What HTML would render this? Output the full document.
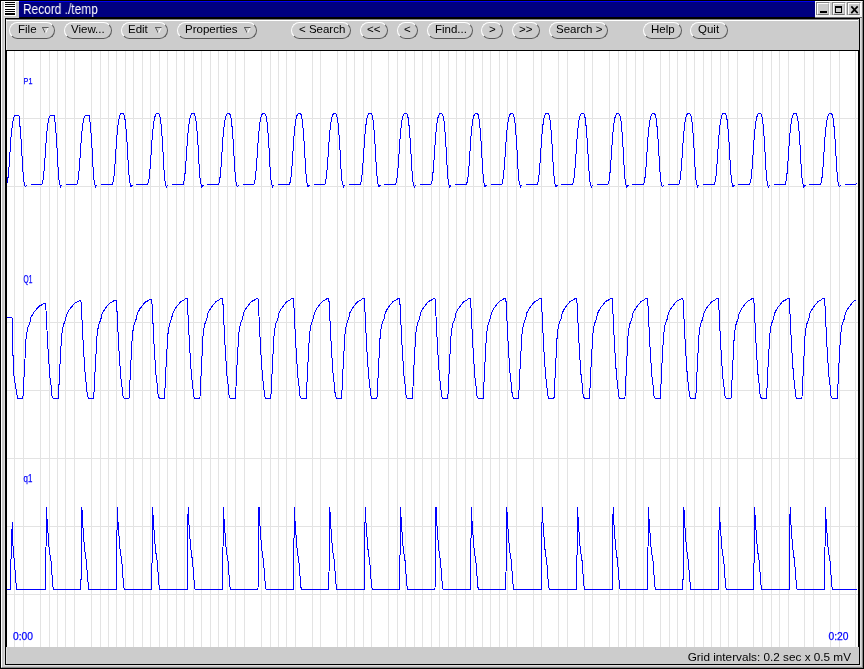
<!DOCTYPE html>
<html><head><meta charset="utf-8"><title>Record ./temp</title>
<style>
html,body{margin:0;padding:0}
body{width:864px;height:669px;overflow:hidden;background:#c8c8c8;position:relative;
font-family:"Liberation Sans",sans-serif;font-size:11.5px;color:#000}
div,span,i{position:absolute;box-sizing:border-box}
#ob{left:0;top:0;width:864px;height:669px;border:1px solid #000;border-right:1px solid #000;border-bottom:1px solid #000}
#hl{left:1px;top:1px;width:862px;height:667px;border-left:1px solid #fff;border-top:1px solid #fff;border-right:1px solid #858585;border-bottom:1px solid #858585}
#il{left:4px;top:17px;width:857px;height:649px;border-left:1px solid #dadada;border-right:1px solid #dedede;border-bottom:1px solid #dedede}
#title{left:19px;top:1px;width:796px;height:16px;background:#000080;border-top:1px solid #0000f0;color:#fff;font-size:12px;line-height:15px}
#title span{will-change:transform;left:4px;top:0px;white-space:nowrap;font-size:14px;transform:scaleX(0.85);transform-origin:0 0}
#micon{left:4px;top:2px;width:12px;height:14px;background:#fff}
#micon i{left:1px;width:10px;height:1px;background:#000}
#tsh{left:19px;top:17px;width:796px;height:1px;background:#000}
.wb{top:2px;width:14px;height:13px;background:#ccc;border-top:1px solid #858585;border-left:1px solid #858585;border-right:1px solid #fff}
.wb b{position:absolute;box-sizing:border-box;left:0;top:0;width:12px;height:12px;border-top:1px solid #fff;border-left:1px solid #fff;border-bottom:1px solid #707070;border-right:1px solid #b0b0b0}
#inner{left:5px;top:18px;width:855px;height:647px;border:1px solid #000;background:#ccc}
#tbhl{left:6px;top:19px;width:852px;height:31px;border-top:1px solid #808080;border-left:1px solid #e8e8e8}
#tbhl2{left:6px;top:20px;width:852px;height:1px;background:#fff}
#cv{left:6px;top:50px;width:853px;height:597px;background:#fff;border-left:1px solid #000;border-right:1px solid #000;border-top:1px solid #000}
.b{top:22px;height:17px;border:1px solid #fff;border-right-color:#585858;border-bottom-color:#585858;border-radius:8.5px;background:#ccc}
.b span{will-change:transform;top:-1px;height:14px;line-height:14px;white-space:nowrap;text-align:left;letter-spacing:0}
.ar{top:3px;width:9px;height:9px}
#foot{will-change:transform;left:600px;top:650px;width:251px;height:13px;line-height:13px;text-align:right;white-space:nowrap;font-size:11.75px}
#wba{left:815px;top:1px;width:47px;height:16px;background:#ccc;border-left:1px solid #fff;border-top:1px solid #fff;border-bottom:2px solid #f2f2f2;border-right:1px solid #f2f2f2}
#tend{left:815px;top:17px;width:47px;height:1px;background:#6c6c6c}
#fhl{left:6px;top:647px;width:1px;height:17px;background:#dedede}
svg{position:absolute;left:0;top:0}
#plot{will-change:transform}
</style></head><body>
<div id="ob"></div><div id="hl"></div><div id="il"></div>
<div id="micon"><i style="top:0"></i><i style="top:2px"></i><i style="top:4px"></i><i style="top:7px"></i><i style="top:9px"></i><i style="top:11px;height:2px"></i></div>
<div id="title"><span>Record ./temp</span></div><div id="tsh"></div>
<div id="wba"></div><div id="tend"></div>
<div class="wb" style="left:816px"><b></b><i style="left:3px;top:8px;width:7px;height:2px;background:#000"></i></div>
<div class="wb" style="left:832px"><b></b><i style="left:2px;top:3px;width:7px;height:7px;border:1px solid #000;border-top-width:2px"></i></div>
<div class="wb" style="left:847px"><b></b><svg style="left:2px;top:2px" width="9" height="9" viewBox="0 0 9 9"><path d="M1.3 1.3 L7.7 8.2 M7.7 1.3 L1.3 8.2" stroke="#000" stroke-width="1.7" fill="none"/></svg></div>
<div id="inner"></div><div id="tbhl"></div><div id="tbhl2"></div>
<div class="b" style="left:9px;width:46px"><span style="left:7.8px;width:17.0px">File</span><svg class="ar" style="left:31px;top:3px" width="9" height="9" viewBox="0 0 9 9"><path d="M1 1.5H7.5M1.5 1.5L4.3 7" stroke="#5c5c5c" fill="none"/><path d="M7 2L4.6 7" stroke="#fff" fill="none"/></svg></div><div class="b" style="left:64px;width:48px"><span style="left:5.9px;width:32.3px">View...</span></div><div class="b" style="left:121px;width:47px"><span style="left:5.9px;width:18.0px">Edit</span><svg class="ar" style="left:32px;top:3px" width="9" height="9" viewBox="0 0 9 9"><path d="M1 1.5H7.5M1.5 1.5L4.3 7" stroke="#5c5c5c" fill="none"/><path d="M7 2L4.6 7" stroke="#fff" fill="none"/></svg></div><div class="b" style="left:177px;width:80px"><span style="left:6.9px;width:52.0px">Properties</span><svg class="ar" style="left:65px;top:3px" width="9" height="9" viewBox="0 0 9 9"><path d="M1 1.5H7.5M1.5 1.5L4.3 7" stroke="#5c5c5c" fill="none"/><path d="M7 2L4.6 7" stroke="#fff" fill="none"/></svg></div><div class="b" style="left:291px;width:60px"><span style="left:6.8px;width:44.0px">&lt; Search</span></div><div class="b" style="left:360px;width:28px"><span style="left:5.8px;width:12.6px">&lt;&lt;</span></div><div class="b" style="left:397px;width:21px"><span style="left:5.8px;width:6.5px">&lt;</span></div><div class="b" style="left:427px;width:46px"><span style="left:7.1px;width:30.6px">Find...</span></div><div class="b" style="left:481px;width:22px"><span style="left:6.8px;width:6.5px">&gt;</span></div><div class="b" style="left:512px;width:28px"><span style="left:5.9px;width:12.6px">&gt;&gt;</span></div><div class="b" style="left:549px;width:59px"><span style="left:6.0px;width:44.4px">Search &gt;</span></div><div class="b" style="left:643px;width:39px"><span style="left:7.3px;width:22.7px">Help</span></div><div class="b" style="left:690px;width:38px"><span style="left:7.1px;width:22.8px">Quit</span></div>
<div id="cv"></div><div id="fhl"></div>
<svg id="plot" width="864" height="669" viewBox="0 0 864 669"><g fill="#e3e3e3" shape-rendering="crispEdges"><rect x="14" y="51" width="1" height="596"/><rect x="23" y="51" width="1" height="596"/><rect x="40" y="51" width="1" height="596"/><rect x="49" y="51" width="1" height="596"/><rect x="57" y="51" width="1" height="596"/><rect x="65" y="51" width="1" height="596"/><rect x="74" y="51" width="1" height="596"/><rect x="91" y="51" width="1" height="596"/><rect x="100" y="51" width="1" height="596"/><rect x="108" y="51" width="1" height="596"/><rect x="116" y="51" width="1" height="596"/><rect x="125" y="51" width="1" height="596"/><rect x="133" y="51" width="1" height="596"/><rect x="142" y="51" width="1" height="596"/><rect x="150" y="51" width="1" height="596"/><rect x="159" y="51" width="1" height="596"/><rect x="167" y="51" width="1" height="596"/><rect x="176" y="51" width="1" height="596"/><rect x="184" y="51" width="1" height="596"/><rect x="193" y="51" width="1" height="596"/><rect x="201" y="51" width="1" height="596"/><rect x="210" y="51" width="1" height="596"/><rect x="218" y="51" width="1" height="596"/><rect x="227" y="51" width="1" height="596"/><rect x="235" y="51" width="1" height="596"/><rect x="244" y="51" width="1" height="596"/><rect x="261" y="51" width="1" height="596"/><rect x="270" y="51" width="1" height="596"/><rect x="278" y="51" width="1" height="596"/><rect x="286" y="51" width="1" height="596"/><rect x="295" y="51" width="1" height="596"/><rect x="312" y="51" width="1" height="596"/><rect x="320" y="51" width="1" height="596"/><rect x="337" y="51" width="1" height="596"/><rect x="346" y="51" width="1" height="596"/><rect x="354" y="51" width="1" height="596"/><rect x="363" y="51" width="1" height="596"/><rect x="371" y="51" width="1" height="596"/><rect x="388" y="51" width="1" height="596"/><rect x="397" y="51" width="1" height="596"/><rect x="405" y="51" width="1" height="596"/><rect x="414" y="51" width="1" height="596"/><rect x="422" y="51" width="1" height="596"/><rect x="431" y="51" width="1" height="596"/><rect x="439" y="51" width="1" height="596"/><rect x="448" y="51" width="1" height="596"/><rect x="456" y="51" width="1" height="596"/><rect x="465" y="51" width="1" height="596"/><rect x="473" y="51" width="1" height="596"/><rect x="482" y="51" width="1" height="596"/><rect x="490" y="51" width="1" height="596"/><rect x="499" y="51" width="1" height="596"/><rect x="507" y="51" width="1" height="596"/><rect x="516" y="51" width="1" height="596"/><rect x="533" y="51" width="1" height="596"/><rect x="541" y="51" width="1" height="596"/><rect x="558" y="51" width="1" height="596"/><rect x="567" y="51" width="1" height="596"/><rect x="584" y="51" width="1" height="596"/><rect x="592" y="51" width="1" height="596"/><rect x="609" y="51" width="1" height="596"/><rect x="618" y="51" width="1" height="596"/><rect x="626" y="51" width="1" height="596"/><rect x="635" y="51" width="1" height="596"/><rect x="643" y="51" width="1" height="596"/><rect x="660" y="51" width="1" height="596"/><rect x="669" y="51" width="1" height="596"/><rect x="677" y="51" width="1" height="596"/><rect x="686" y="51" width="1" height="596"/><rect x="694" y="51" width="1" height="596"/><rect x="703" y="51" width="1" height="596"/><rect x="711" y="51" width="1" height="596"/><rect x="720" y="51" width="1" height="596"/><rect x="728" y="51" width="1" height="596"/><rect x="737" y="51" width="1" height="596"/><rect x="753" y="51" width="1" height="596"/><rect x="762" y="51" width="1" height="596"/><rect x="771" y="51" width="1" height="596"/><rect x="779" y="51" width="1" height="596"/><rect x="788" y="51" width="1" height="596"/><rect x="804" y="51" width="1" height="596"/><rect x="813" y="51" width="1" height="596"/><rect x="830" y="51" width="1" height="596"/><rect x="839" y="51" width="1" height="596"/><rect x="855" y="51" width="1" height="596"/><rect x="7" y="118" width="851" height="1"/><rect x="7" y="186" width="851" height="1"/><rect x="7" y="322" width="851" height="1"/><rect x="7" y="390" width="851" height="1"/><rect x="7" y="458" width="851" height="1"/><rect x="7" y="526" width="851" height="1"/><rect x="7" y="594" width="851" height="1"/></g><g fill="none" stroke="#0000ff" stroke-width="1" shape-rendering="crispEdges"><polyline points="7.0,182.8 7.3,182.0 8.1,177.0 9.1,166.0 10.1,151.0 11.1,136.0 12.1,127.0 13.1,120.0 14.1,116.4 15.1,115.0 18.6,115.0 19.2,117.0 19.6,122.0 20.6,133.0 21.6,148.0 22.6,167.0 23.6,180.0 24.6,185.0 25.2,187.0 26.1,185.6 26.8,185.0"/><polyline points="30.6,184.0 42.0,184.0 42.7,182.0 43.5,177.0 44.5,166.0 45.5,151.0 46.5,136.0 47.5,127.0 48.5,120.0 49.5,116.4 50.5,115.0 54.0,115.0 54.6,117.0 55.0,122.0 56.0,133.0 57.0,148.0 58.0,167.0 59.0,180.0 60.0,185.0 60.6,187.0 61.5,185.6 62.2,185.0"/><polyline points="65.6,184.0 77.0,184.0 77.7,182.0 78.5,177.0 79.5,166.0 80.5,151.0 81.5,136.0 82.5,127.0 83.5,120.0 84.5,116.4 85.5,115.0 89.0,115.0 89.6,117.0 90.0,122.0 91.0,133.0 92.0,148.0 93.0,167.0 94.0,180.0 95.0,185.0 95.6,187.0 96.5,185.6 97.2,185.0"/><polyline points="101.0,184.0 112.4,184.0 113.1,182.0 113.9,177.0 114.9,166.0 115.9,151.0 116.9,136.0 117.9,126.0 118.9,119.0 119.9,115.5 120.9,113.8 121.9,113.2 122.9,113.2 123.9,114.5 124.7,117.5 125.4,122.0 126.4,133.0 127.4,148.0 128.4,167.0 129.4,180.0 130.4,185.0 131.0,187.0 131.9,185.6 132.6,185.0"/><polyline points="136.4,184.0 147.8,184.0 148.5,182.0 149.3,177.0 150.3,166.0 151.3,151.0 152.3,136.0 153.3,126.0 154.3,119.0 155.3,115.5 156.3,113.8 157.3,113.2 158.3,113.2 159.3,114.5 160.1,117.5 160.8,122.0 161.8,133.0 162.8,148.0 163.8,167.0 164.8,180.0 165.8,185.0 166.4,187.0 167.3,185.6 168.0,185.0"/><polyline points="171.8,184.0 183.2,184.0 183.9,182.0 184.7,177.0 185.7,166.0 186.7,151.0 187.7,136.0 188.7,126.0 189.7,119.0 190.7,115.5 191.7,113.8 192.7,113.2 193.7,113.2 194.7,114.5 195.5,117.5 196.2,122.0 197.2,133.0 198.2,148.0 199.2,167.0 200.2,180.0 201.2,185.0 201.8,187.0 202.7,185.6 203.4,185.0"/><polyline points="207.2,184.0 218.6,184.0 219.3,182.0 220.1,177.0 221.1,166.0 222.1,151.0 223.1,136.0 224.1,126.0 225.1,119.0 226.1,115.5 227.1,113.8 228.1,113.2 229.1,113.2 230.1,114.5 230.9,117.5 231.6,122.0 232.6,133.0 233.6,148.0 234.6,167.0 235.6,180.0 236.6,185.0 237.2,187.0 238.1,185.6 238.8,185.0"/><polyline points="242.6,184.0 254.0,184.0 254.7,182.0 255.5,177.0 256.5,166.0 257.5,151.0 258.5,136.0 259.5,126.0 260.5,119.0 261.5,115.5 262.5,113.8 263.5,113.2 264.5,113.2 265.5,114.5 266.3,117.5 267.0,122.0 268.0,133.0 269.0,148.0 270.0,167.0 271.0,180.0 272.0,185.0 272.6,187.0 273.5,185.6 274.2,185.0"/><polyline points="278.1,184.0 289.5,184.0 290.2,182.0 291.0,177.0 292.0,166.0 293.0,151.0 294.0,136.0 295.0,126.0 296.0,119.0 297.0,115.5 298.0,113.8 299.0,113.2 300.0,113.2 301.0,114.5 301.8,117.5 302.5,122.0 303.5,133.0 304.5,148.0 305.5,167.0 306.5,180.0 307.5,185.0 308.1,187.0 309.0,185.6 309.7,185.0"/><polyline points="313.5,184.0 324.9,184.0 325.6,182.0 326.4,177.0 327.4,166.0 328.4,151.0 329.4,136.0 330.4,126.0 331.4,119.0 332.4,115.5 333.4,113.8 334.4,113.2 335.4,113.2 336.4,114.5 337.2,117.5 337.9,122.0 338.9,133.0 339.9,148.0 340.9,167.0 341.9,180.0 342.9,185.0 343.5,187.0 344.4,185.6 345.1,185.0"/><polyline points="348.9,184.0 360.3,184.0 361.0,182.0 361.8,177.0 362.8,166.0 363.8,151.0 364.8,136.0 365.8,126.0 366.8,119.0 367.8,115.5 368.8,113.8 369.8,113.2 370.8,113.2 371.8,114.5 372.6,117.5 373.3,122.0 374.3,133.0 375.3,148.0 376.3,167.0 377.3,180.0 378.3,185.0 378.9,187.0 379.8,185.6 380.5,185.0"/><polyline points="384.3,184.0 395.7,184.0 396.4,182.0 397.2,177.0 398.2,166.0 399.2,151.0 400.2,136.0 401.2,126.0 402.2,119.0 403.2,115.5 404.2,113.8 405.2,113.2 406.2,113.2 407.2,114.5 408.0,117.5 408.7,122.0 409.7,133.0 410.7,148.0 411.7,167.0 412.7,180.0 413.7,185.0 414.3,187.0 415.2,185.6 415.9,185.0"/><polyline points="419.7,184.0 431.1,184.0 431.8,182.0 432.6,177.0 433.6,166.0 434.6,151.0 435.6,136.0 436.6,126.0 437.6,119.0 438.6,115.5 439.6,113.8 440.6,113.2 441.6,113.2 442.6,114.5 443.4,117.5 444.1,122.0 445.1,133.0 446.1,148.0 447.1,167.0 448.1,180.0 449.1,185.0 449.7,187.0 450.6,185.6 451.3,185.0"/><polyline points="455.1,184.0 466.5,184.0 467.2,182.0 468.0,177.0 469.0,166.0 470.0,151.0 471.0,136.0 472.0,126.0 473.0,119.0 474.0,115.5 475.0,113.8 476.0,113.2 477.0,113.2 478.0,114.5 478.8,117.5 479.5,122.0 480.5,133.0 481.5,148.0 482.5,167.0 483.5,180.0 484.5,185.0 485.1,187.0 486.0,185.6 486.7,185.0"/><polyline points="490.5,184.0 501.9,184.0 502.6,182.0 503.4,177.0 504.4,166.0 505.4,151.0 506.4,136.0 507.4,126.0 508.4,119.0 509.4,115.5 510.4,113.8 511.4,113.2 512.4,113.2 513.4,114.5 514.2,117.5 514.9,122.0 515.9,133.0 516.9,148.0 517.9,167.0 518.9,180.0 519.9,185.0 520.5,187.0 521.4,185.6 522.1,185.0"/><polyline points="525.9,184.0 537.3,184.0 538.0,182.0 538.8,177.0 539.8,166.0 540.8,151.0 541.8,136.0 542.8,126.0 543.8,119.0 544.8,115.5 545.8,113.8 546.8,113.2 547.8,113.2 548.8,114.5 549.6,117.5 550.3,122.0 551.3,133.0 552.3,148.0 553.3,167.0 554.3,180.0 555.3,185.0 555.9,187.0 556.8,185.6 557.5,185.0"/><polyline points="561.3,184.0 572.7,184.0 573.4,182.0 574.2,177.0 575.2,166.0 576.2,151.0 577.2,136.0 578.2,126.0 579.2,119.0 580.2,115.5 581.2,113.8 582.2,113.2 583.2,113.2 584.2,114.5 585.0,117.5 585.7,122.0 586.7,133.0 587.7,148.0 588.7,167.0 589.7,180.0 590.7,185.0 591.3,187.0 592.2,185.6 592.9,185.0"/><polyline points="596.8,184.0 608.1,184.0 608.9,182.0 609.6,177.0 610.6,166.0 611.6,151.0 612.6,136.0 613.6,126.0 614.6,119.0 615.6,115.5 616.6,113.8 617.6,113.2 618.6,113.2 619.6,114.5 620.4,117.5 621.1,122.0 622.1,133.0 623.1,148.0 624.1,167.0 625.1,180.0 626.1,185.0 626.8,187.0 627.6,185.6 628.4,185.0"/><polyline points="632.2,184.0 643.6,184.0 644.3,182.0 645.1,177.0 646.1,166.0 647.1,151.0 648.1,136.0 649.1,126.0 650.1,119.0 651.1,115.5 652.1,113.8 653.1,113.2 654.1,113.2 655.1,114.5 655.9,117.5 656.6,122.0 657.6,133.0 658.6,148.0 659.6,167.0 660.6,180.0 661.6,185.0 662.2,187.0 663.1,185.6 663.8,185.0"/><polyline points="667.6,184.0 679.0,184.0 679.7,182.0 680.5,177.0 681.5,166.0 682.5,151.0 683.5,136.0 684.5,126.0 685.5,119.0 686.5,115.5 687.5,113.8 688.5,113.2 689.5,113.2 690.5,114.5 691.3,117.5 692.0,122.0 693.0,133.0 694.0,148.0 695.0,167.0 696.0,180.0 697.0,185.0 697.6,187.0 698.5,185.6 699.2,185.0"/><polyline points="703.0,184.0 714.4,184.0 715.1,182.0 715.9,177.0 716.9,166.0 717.9,151.0 718.9,136.0 719.9,126.0 720.9,119.0 721.9,115.5 722.9,113.8 723.9,113.2 724.9,113.2 725.9,114.5 726.7,117.5 727.4,122.0 728.4,133.0 729.4,148.0 730.4,167.0 731.4,180.0 732.4,185.0 733.0,187.0 733.9,185.6 734.6,185.0"/><polyline points="738.4,184.0 749.8,184.0 750.5,182.0 751.3,177.0 752.3,166.0 753.3,151.0 754.3,136.0 755.3,126.0 756.3,119.0 757.3,115.5 758.3,113.8 759.3,113.2 760.3,113.2 761.3,114.5 762.1,117.5 762.8,122.0 763.8,133.0 764.8,148.0 765.8,167.0 766.8,180.0 767.8,185.0 768.4,187.0 769.3,185.6 770.0,185.0"/><polyline points="773.8,184.0 785.2,184.0 785.9,182.0 786.7,177.0 787.7,166.0 788.7,151.0 789.7,136.0 790.7,126.0 791.7,119.0 792.7,115.5 793.7,113.8 794.7,113.2 795.7,113.2 796.7,114.5 797.5,117.5 798.2,122.0 799.2,133.0 800.2,148.0 801.2,167.0 802.2,180.0 803.2,185.0 803.8,187.0 804.7,185.6 805.4,185.0"/><polyline points="809.2,184.0 820.6,184.0 821.3,182.0 822.1,177.0 823.1,166.0 824.1,151.0 825.1,136.0 826.1,126.0 827.1,119.0 828.1,115.5 829.1,113.8 830.1,113.2 831.1,113.2 832.1,114.5 832.9,117.5 833.6,122.0 834.6,133.0 835.6,148.0 836.6,167.0 837.6,180.0 838.6,185.0 839.2,187.0 840.1,185.6 840.8,185.0"/><polyline points="844.6,184.0 856.0,184.0 856.5,182.6"/><polyline points="7.0,317.4 12.0,317.4 12.3,331.0 12.8,349.0 13.3,365.0 14.0,376.0 15.0,383.0 16.5,392.0 17.7,398.0 18.2,398.6 22.7,398.6 23.0,396.7 23.5,387.2 24.5,367.2 25.5,350.0 26.0,339.5 27.0,331.9 28.0,327.1 30.0,322.4 31.0,317.3 33.5,312.8 36.0,309.7 39.0,306.2 42.0,304.7 44.0,303.3 45.5,303.3 45.5,303.3 46.0,310.3 47.0,330.3 48.0,349.2 49.0,364.3 50.0,378.1 51.0,385.3 52.0,395.7 53.0,398.0 53.6,398.6 58.1,398.6 58.4,396.6 58.9,386.8 59.9,366.2 60.9,348.6 61.4,337.8 62.4,329.9 63.4,325.0 65.4,320.1 66.4,314.9 68.9,310.3 71.4,307.1 74.4,303.4 77.4,302.0 79.4,300.5 80.9,300.5 80.9,300.5 81.4,307.7 82.4,328.3 83.4,347.8 84.4,363.3 85.4,377.5 86.4,384.9 87.4,395.7 88.4,398.0 89.0,398.6 93.5,398.6 93.8,396.6 94.3,386.8 95.3,366.1 96.3,348.3 96.8,337.5 97.8,329.6 98.8,324.6 100.8,319.7 101.8,314.5 104.3,309.9 106.8,306.6 109.8,303.0 112.8,301.5 114.8,300.0 116.3,300.0 116.3,300.0 116.8,307.2 117.8,327.9 118.8,347.5 119.8,363.1 120.8,377.4 121.8,384.8 122.8,395.6 123.8,398.0 124.4,398.6 128.9,398.6 129.2,396.6 129.7,386.7 130.7,365.8 131.7,347.9 132.2,337.0 133.2,329.0 134.2,324.1 136.2,319.1 137.2,313.8 139.7,309.1 142.2,305.9 145.2,302.2 148.2,300.7 150.2,299.2 151.7,299.2 151.7,299.2 152.2,306.5 153.2,327.3 154.2,347.1 155.2,362.8 156.2,377.2 157.2,384.7 158.2,395.6 159.2,398.0 159.8,398.6 164.3,398.6 164.6,396.6 165.1,386.6 166.1,365.7 167.1,347.7 167.6,336.7 168.6,328.7 169.6,323.8 171.6,318.8 172.6,313.5 175.1,308.8 177.6,305.5 180.6,301.8 183.6,300.3 185.6,298.8 187.1,298.8 187.1,298.8 187.6,306.1 188.6,327.0 189.6,346.9 190.6,362.7 191.6,377.1 192.6,384.6 193.6,395.6 194.6,398.0 195.2,398.6 199.7,398.6 200.0,396.6 200.5,386.6 201.5,365.6 202.5,347.5 203.0,336.5 204.0,328.5 205.0,323.5 207.0,318.5 208.0,313.2 210.5,308.5 213.0,305.2 216.0,301.5 219.0,300.0 221.0,298.5 222.5,298.5 222.6,298.5 223.1,305.8 224.1,326.8 225.1,346.7 226.1,362.6 227.1,377.1 228.1,384.6 229.1,395.6 230.1,398.0 230.7,398.6 235.2,398.6 235.5,396.6 236.0,386.6 237.0,365.6 238.0,347.5 238.5,336.5 239.5,328.5 240.5,323.5 242.5,318.5 243.5,313.2 246.0,308.5 248.5,305.2 251.5,301.5 254.5,300.0 256.5,298.5 258.0,298.5 258.0,298.5 258.5,305.8 259.5,326.8 260.5,346.7 261.5,362.6 262.5,377.1 263.5,384.6 264.5,395.6 265.5,398.0 266.1,398.6 270.6,398.6 270.9,396.6 271.4,386.6 272.4,365.6 273.4,347.5 273.9,336.5 274.9,328.5 275.9,323.5 277.9,318.5 278.9,313.2 281.4,308.5 283.9,305.2 286.9,301.5 289.9,300.0 291.9,298.5 293.4,298.5 293.4,298.5 293.9,305.8 294.9,326.8 295.9,346.7 296.9,362.6 297.9,377.1 298.9,384.6 299.9,395.6 300.9,398.0 301.5,398.6 306.0,398.6 306.3,396.6 306.8,386.6 307.8,365.6 308.8,347.5 309.3,336.5 310.3,328.5 311.3,323.5 313.3,318.5 314.3,313.2 316.8,308.5 319.3,305.2 322.3,301.5 325.3,300.0 327.3,298.5 328.8,298.5 328.8,298.5 329.3,305.8 330.3,326.8 331.3,346.7 332.3,362.6 333.3,377.1 334.3,384.6 335.3,395.6 336.3,398.0 336.9,398.6 341.4,398.6 341.7,396.6 342.2,386.6 343.2,365.6 344.2,347.5 344.7,336.5 345.7,328.5 346.7,323.5 348.7,318.5 349.7,313.2 352.2,308.5 354.7,305.2 357.7,301.5 360.7,300.0 362.7,298.5 364.2,298.5 364.2,298.5 364.7,305.8 365.7,326.8 366.7,346.7 367.7,362.6 368.7,377.1 369.7,384.6 370.7,395.6 371.7,398.0 372.3,398.6 376.8,398.6 377.1,396.6 377.6,386.6 378.6,365.6 379.6,347.5 380.1,336.5 381.1,328.5 382.1,323.5 384.1,318.5 385.1,313.2 387.6,308.5 390.1,305.2 393.1,301.5 396.1,300.0 398.1,298.5 399.6,298.5 399.6,298.5 400.1,305.8 401.1,326.8 402.1,346.7 403.1,362.6 404.1,377.1 405.1,384.6 406.1,395.6 407.1,398.0 407.7,398.6 412.2,398.6 412.5,396.6 413.0,386.6 414.0,365.6 415.0,347.5 415.5,336.5 416.5,328.5 417.5,323.5 419.5,318.5 420.5,313.2 423.0,308.5 425.5,305.2 428.5,301.5 431.5,300.0 433.5,298.5 435.0,298.5 435.0,298.5 435.5,305.8 436.5,326.8 437.5,346.7 438.5,362.6 439.5,377.1 440.5,384.6 441.5,395.6 442.5,398.0 443.1,398.6 447.6,398.6 447.9,396.6 448.4,386.6 449.4,365.6 450.4,347.5 450.9,336.5 451.9,328.5 452.9,323.5 454.9,318.5 455.9,313.2 458.4,308.5 460.9,305.2 463.9,301.5 466.9,300.0 468.9,298.5 470.4,298.5 470.4,298.5 470.9,305.8 471.9,326.8 472.9,346.7 473.9,362.6 474.9,377.1 475.9,384.6 476.9,395.6 477.9,398.0 478.5,398.6 483.0,398.6 483.3,396.6 483.8,386.6 484.8,365.6 485.8,347.5 486.3,336.5 487.3,328.5 488.3,323.5 490.3,318.5 491.3,313.2 493.8,308.5 496.3,305.2 499.3,301.5 502.3,300.0 504.3,298.5 505.8,298.5 505.8,298.5 506.3,305.8 507.3,326.8 508.3,346.7 509.3,362.6 510.3,377.1 511.3,384.6 512.3,395.6 513.3,398.0 513.9,398.6 518.4,398.6 518.7,396.6 519.2,386.6 520.2,365.6 521.2,347.5 521.7,336.5 522.7,328.5 523.7,323.5 525.7,318.5 526.7,313.2 529.2,308.5 531.7,305.2 534.7,301.5 537.7,300.0 539.7,298.5 541.2,298.5 541.2,298.5 541.7,305.8 542.7,326.8 543.7,346.7 544.7,362.6 545.7,377.1 546.7,384.6 547.7,395.6 548.7,398.0 549.3,398.6 553.9,398.6 554.1,396.6 554.6,386.6 555.6,365.6 556.6,347.5 557.1,336.5 558.1,328.5 559.1,323.5 561.1,318.5 562.1,313.2 564.6,308.5 567.1,305.2 570.1,301.5 573.1,300.0 575.1,298.5 576.6,298.5 576.7,298.5 577.2,305.8 578.2,326.8 579.2,346.7 580.2,362.6 581.2,377.1 582.2,384.6 583.2,395.6 584.2,398.0 584.8,398.6 589.3,398.6 589.6,396.6 590.1,386.6 591.1,365.6 592.1,347.5 592.6,336.5 593.6,328.5 594.6,323.5 596.6,318.5 597.6,313.2 600.1,308.5 602.6,305.2 605.6,301.5 608.6,300.0 610.6,298.5 612.1,298.5 612.1,298.5 612.6,305.8 613.6,326.8 614.6,346.7 615.6,362.6 616.6,377.1 617.6,384.6 618.6,395.6 619.6,398.0 620.2,398.6 624.7,398.6 625.0,396.6 625.5,386.6 626.5,365.6 627.5,347.5 628.0,336.5 629.0,328.5 630.0,323.5 632.0,318.5 633.0,313.2 635.5,308.5 638.0,305.2 641.0,301.5 644.0,300.0 646.0,298.5 647.5,298.5 647.5,298.5 648.0,305.8 649.0,326.8 650.0,346.7 651.0,362.6 652.0,377.1 653.0,384.6 654.0,395.6 655.0,398.0 655.6,398.6 660.1,398.6 660.4,396.6 660.9,386.6 661.9,365.6 662.9,347.5 663.4,336.5 664.4,328.5 665.4,323.5 667.4,318.5 668.4,313.2 670.9,308.5 673.4,305.2 676.4,301.5 679.4,300.0 681.4,298.5 682.9,298.5 682.9,298.5 683.4,305.8 684.4,326.8 685.4,346.7 686.4,362.6 687.4,377.1 688.4,384.6 689.4,395.6 690.4,398.0 691.0,398.6 695.5,398.6 695.8,396.6 696.3,386.6 697.3,365.6 698.3,347.5 698.8,336.5 699.8,328.5 700.8,323.5 702.8,318.5 703.8,313.2 706.3,308.5 708.8,305.2 711.8,301.5 714.8,300.0 716.8,298.5 718.3,298.5 718.3,298.5 718.8,305.8 719.8,326.8 720.8,346.7 721.8,362.6 722.8,377.1 723.8,384.6 724.8,395.6 725.8,398.0 726.4,398.6 730.9,398.6 731.2,396.6 731.7,386.6 732.7,365.6 733.7,347.5 734.2,336.5 735.2,328.5 736.2,323.5 738.2,318.5 739.2,313.2 741.7,308.5 744.2,305.2 747.2,301.5 750.2,300.0 752.2,298.5 753.7,298.5 753.7,298.5 754.2,305.8 755.2,326.8 756.2,346.7 757.2,362.6 758.2,377.1 759.2,384.6 760.2,395.6 761.2,398.0 761.8,398.6 766.3,398.6 766.6,396.6 767.1,386.6 768.1,365.6 769.1,347.5 769.6,336.5 770.6,328.5 771.6,323.5 773.6,318.5 774.6,313.2 777.1,308.5 779.6,305.2 782.6,301.5 785.6,300.0 787.6,298.5 789.1,298.5 789.1,298.5 789.6,305.8 790.6,326.8 791.6,346.7 792.6,362.6 793.6,377.1 794.6,384.6 795.6,395.6 796.6,398.0 797.2,398.6 801.7,398.6 802.0,396.6 802.5,386.6 803.5,365.6 804.5,347.5 805.0,336.5 806.0,328.5 807.0,323.5 809.0,318.5 810.0,313.2 812.5,308.5 815.0,305.2 818.0,301.5 821.0,300.0 823.0,298.5 824.5,298.5 824.5,298.5 825.0,305.8 826.0,326.8 827.0,346.7 828.0,362.6 829.0,377.1 830.0,384.6 831.0,395.6 832.0,398.0 832.6,398.6 837.1,398.6 837.4,396.6 837.9,386.6 838.9,365.6 839.9,347.5 840.4,336.5 841.4,328.5 842.4,323.5 844.4,318.5 845.4,313.2 847.9,308.5 850.4,305.2 853.4,301.5 856.4,300.0 856.5,299.9"/><polyline points="7.0,589.0 10.3,589.0 10.8,566.0 11.8,533.0 12.4,522.0 12.7,522.0 13.0,546.0 14.0,558.0 15.0,570.0 16.0,583.0 16.8,589.0 44.8,589.0 45.5,589.0 46.0,548.0 46.5,507.0 47.0,519.0 48.0,533.0 49.0,547.0 50.0,555.0 51.0,561.0 52.0,575.0 53.0,587.0 53.5,589.0 80.2,589.0 80.9,589.0 81.4,548.0 81.9,507.0 82.4,519.0 83.4,533.0 84.4,547.0 85.4,555.0 86.4,561.0 87.4,575.0 88.4,587.0 88.9,589.0 115.6,589.0 116.3,589.0 116.8,548.0 117.3,507.0 117.8,519.0 118.8,533.0 119.8,547.0 120.8,555.0 121.8,561.0 122.8,575.0 123.8,587.0 124.3,589.0 151.0,589.0 151.7,589.0 152.2,548.0 152.7,507.0 153.2,519.0 154.2,533.0 155.2,547.0 156.2,555.0 157.2,561.0 158.2,575.0 159.2,587.0 159.7,589.0 186.4,589.0 187.1,589.0 187.6,548.0 188.1,507.0 188.6,519.0 189.6,533.0 190.6,547.0 191.6,555.0 192.6,561.0 193.6,575.0 194.6,587.0 195.1,589.0 221.8,589.0 222.5,589.0 223.0,548.0 223.5,507.0 224.0,519.0 225.0,533.0 226.0,547.0 227.0,555.0 228.0,561.0 229.0,575.0 230.0,587.0 230.5,589.0 257.3,589.0 258.0,589.0 258.5,548.0 259.0,507.0 259.5,519.0 260.5,533.0 261.5,547.0 262.5,555.0 263.5,561.0 264.5,575.0 265.5,587.0 266.0,589.0 292.7,589.0 293.4,589.0 293.9,548.0 294.4,507.0 294.9,519.0 295.9,533.0 296.9,547.0 297.9,555.0 298.9,561.0 299.9,575.0 300.9,587.0 301.4,589.0 328.1,589.0 328.8,589.0 329.3,548.0 329.8,507.0 330.3,519.0 331.3,533.0 332.3,547.0 333.3,555.0 334.3,561.0 335.3,575.0 336.3,587.0 336.8,589.0 363.5,589.0 364.2,589.0 364.7,548.0 365.2,507.0 365.7,519.0 366.7,533.0 367.7,547.0 368.7,555.0 369.7,561.0 370.7,575.0 371.7,587.0 372.2,589.0 398.9,589.0 399.6,589.0 400.1,548.0 400.6,507.0 401.1,519.0 402.1,533.0 403.1,547.0 404.1,555.0 405.1,561.0 406.1,575.0 407.1,587.0 407.6,589.0 434.3,589.0 435.0,589.0 435.5,548.0 436.0,507.0 436.5,519.0 437.5,533.0 438.5,547.0 439.5,555.0 440.5,561.0 441.5,575.0 442.5,587.0 443.0,589.0 469.7,589.0 470.4,589.0 470.9,548.0 471.4,507.0 471.9,519.0 472.9,533.0 473.9,547.0 474.9,555.0 475.9,561.0 476.9,575.0 477.9,587.0 478.4,589.0 505.1,589.0 505.8,589.0 506.3,548.0 506.8,507.0 507.3,519.0 508.3,533.0 509.3,547.0 510.3,555.0 511.3,561.0 512.3,575.0 513.3,587.0 513.8,589.0 540.5,589.0 541.2,589.0 541.7,548.0 542.2,507.0 542.7,519.0 543.7,533.0 544.7,547.0 545.7,555.0 546.7,561.0 547.7,575.0 548.7,587.0 549.2,589.0 575.9,589.0 576.6,589.0 577.1,548.0 577.6,507.0 578.1,519.0 579.1,533.0 580.1,547.0 581.1,555.0 582.1,561.0 583.1,575.0 584.1,587.0 584.6,589.0 611.4,589.0 612.1,589.0 612.6,548.0 613.1,507.0 613.6,519.0 614.6,533.0 615.6,547.0 616.6,555.0 617.6,561.0 618.6,575.0 619.6,587.0 620.1,589.0 646.8,589.0 647.5,589.0 648.0,548.0 648.5,507.0 649.0,519.0 650.0,533.0 651.0,547.0 652.0,555.0 653.0,561.0 654.0,575.0 655.0,587.0 655.5,589.0 682.2,589.0 682.9,589.0 683.4,548.0 683.9,507.0 684.4,519.0 685.4,533.0 686.4,547.0 687.4,555.0 688.4,561.0 689.4,575.0 690.4,587.0 690.9,589.0 717.6,589.0 718.3,589.0 718.8,548.0 719.3,507.0 719.8,519.0 720.8,533.0 721.8,547.0 722.8,555.0 723.8,561.0 724.8,575.0 725.8,587.0 726.3,589.0 753.0,589.0 753.7,589.0 754.2,548.0 754.7,507.0 755.2,519.0 756.2,533.0 757.2,547.0 758.2,555.0 759.2,561.0 760.2,575.0 761.2,587.0 761.7,589.0 788.4,589.0 789.1,589.0 789.6,548.0 790.1,507.0 790.6,519.0 791.6,533.0 792.6,547.0 793.6,555.0 794.6,561.0 795.6,575.0 796.6,587.0 797.1,589.0 823.8,589.0 824.5,589.0 825.0,548.0 825.5,507.0 826.0,519.0 827.0,533.0 828.0,547.0 829.0,555.0 830.0,561.0 831.0,575.0 832.0,587.0 832.5,589.0 856.5,589.0"/></g><g fill="#0000ff" stroke="#0000ff" stroke-width="0.25" font-family="Liberation Sans, sans-serif" font-size="11"><text x="23.6" y="84.3" font-size="9.7" textLength="8.8" lengthAdjust="spacingAndGlyphs">P1</text><text x="23.6" y="283" textLength="8.8" lengthAdjust="spacingAndGlyphs">Q1</text><text x="23.6" y="482" font-size="10.5" textLength="8.8" lengthAdjust="spacingAndGlyphs">q1</text><text x="13" y="640" textLength="20" lengthAdjust="spacingAndGlyphs">0:00</text><text x="828.5" y="640" textLength="20" lengthAdjust="spacingAndGlyphs">0:20</text></g></svg>
<div id="foot">Grid intervals: 0.2 sec x 0.5 mV</div>
</body></html>
